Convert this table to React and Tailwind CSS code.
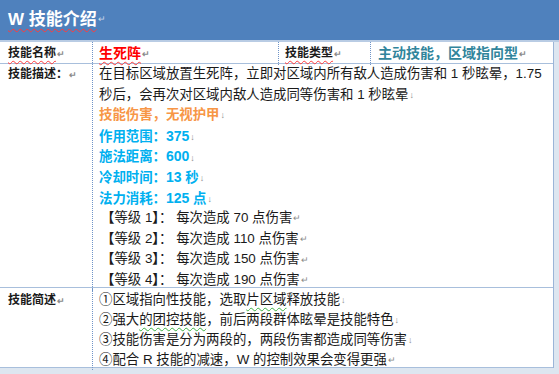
import React from "react";

const Mark = ({ c = "text-[#8a8a8a]" }) => (
  <span className={`text-[9px] ${c} ml-[1px] align-middle`}>↵</span>
);
const Br = () => <span className="text-[9px] text-[#8a8a8a] ml-[1px] align-middle">↓</span>;

const Wavy = ({ children, color = "decoration-[#ff3b3b]" }) => (
  <span className={`underline decoration-wavy ${color} decoration-1 underline-offset-[3px]`}>{children}</span>
);

const L = ({ children, className = "" }) => (
  <div className={`h-[20.6px] leading-[20.6px] ${className}`}>{children}</div>
);
const L2 = ({ children, className = "" }) => (
  <div className={`h-[20px] leading-[20px] ${className}`}>{children}</div>
);

export default function App() {
  return (
    <div className="w-[559px] h-[374px] overflow-hidden bg-[#dde6f0] font-['Liberation_Sans','Noto_Sans_CJK_SC',sans-serif] text-[#1a1a1a]">
      <div className="h-[40px] bg-[#4f81bd] flex items-center px-2 border-b-2 border-[#b9cce4] box-content">
        <span className="text-white font-bold text-[17px]">
          <Wavy>W 技能介绍</Wavy>
        </span>
        <Mark c="text-[#c9d7ea]" />
      </div>
      <div className="w-[554px] bg-white border-r border-[#9bb5d8]">
        <div className="grid grid-cols-[92px_186px_92px_1fr] h-[22px] border-b border-[#a8bfdc] items-center">
          <div className="pl-2 text-[12px] font-bold leading-[22px]">
            <Wavy>技能名称</Wavy>
            <Mark />
          </div>
          <div className="h-full border-l border-dotted border-[#6f94c8] pl-[6px] text-[14px] font-bold text-[#ff0000] leading-[22px]">
            <Wavy>生死阵</Wavy>
            <Mark />
          </div>
          <div className="h-full border-l border-dotted border-[#6f94c8] pl-[6px] text-[12px] font-bold leading-[22px]">
            <Wavy>技能类型</Wavy>
            <Mark />
          </div>
          <div className="h-full border-l border-dotted border-[#6f94c8] pl-[7px] text-[14px] font-bold text-[#31859c] leading-[22px]">
            主动技能，区域指向型
            <Mark />
          </div>
        </div>

        <div className="grid grid-cols-[92px_1fr] h-[224px] border-b border-[#a8bfdc]">
          <div className="pl-2 text-[12px] font-bold leading-[20.6px]">
            技能描述：
            <Mark />
          </div>
          <div className="border-l border-dotted border-[#6f94c8] pl-[6px] text-[13.4px] whitespace-nowrap">
            <L>在目标区域放置生死阵，立即对区域内所有敌人造成伤害和 1 秒眩晕，1.75</L>
            <L>
              秒后，会再次对区域内敌人造成同等伤害和 1 秒眩晕
              <Br />
            </L>
            <L className="text-[#f79646] font-bold">
              技能伤害，无视护甲
              <Br />
            </L>
            <L className="text-[#00b0f0] font-bold">
              作用范围：<span className="text-[14px]">375</span>
              <Br />
            </L>
            <L className="text-[#00b0f0] font-bold">
              施法距离：<span className="text-[14px]">600</span>
              <Br />
            </L>
            <L className="text-[#00b0f0] font-bold">
              冷却时间：<span className="text-[14px]">13</span> 秒
              <Br />
            </L>
            <L className="text-[#00b0f0] font-bold">
              法力消耗：<span className="text-[14px]">125</span> 点
              <Br />
            </L>
            {["1", "2", "3", "4"].map((lv, i) => (
              <L key={lv} className="pl-[2px]">
                <span className="font-bold">【</span>等级 {lv}
                <span className="font-bold">】</span>： 每次造成 {["70", "110", "150", "190"][i]} 点伤害
                <Mark />
              </L>
            ))}
          </div>
        </div>

        <div className="grid grid-cols-[92px_1fr] h-[80px] border-b border-[#a8bfdc]">
          <div className="pl-2 pt-[2px] text-[12px] font-bold leading-[20px]">
            技能简述
            <Mark />
          </div>
          <div className="border-l border-dotted border-[#6f94c8] pl-[6px] pt-[2px] text-[13.4px] whitespace-nowrap">
            <L2>
              ①区域指向性技能，选取<Wavy color="decoration-[#3cb043]">片区域</Wavy>释放技能
              <Br />
            </L2>
            <L2>
              ②强大<Wavy color="decoration-[#3cb043]">的团控技能</Wavy>，前后两段群体眩晕是技能特色
              <Br />
            </L2>
            <L2>
              ③技能伤害是分为两段的，两段伤害都造成同等伤害
              <Br />
            </L2>
            <L2>
              ④配合 R 技能的减速，W 的控制效果会变得更强
              <Mark />
            </L2>
          </div>
        </div>
      </div>
    </div>
  );
}
